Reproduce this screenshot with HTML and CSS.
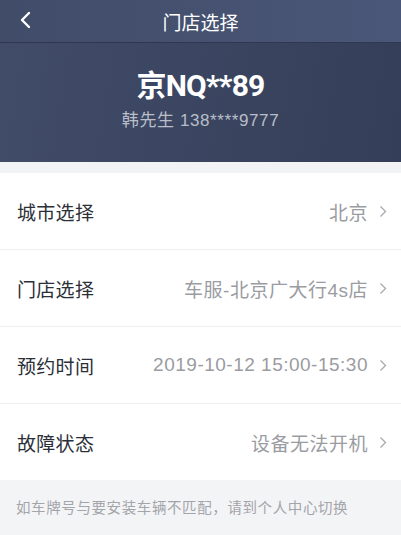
FILE: index.html
```html
<!DOCTYPE html>
<html lang="zh-CN">
<head>
    <meta charset="UTF-8">
    <meta name="viewport" content="width=device-width, initial-scale=1.0">
    <title>门店选择</title>
    <link rel="stylesheet" href="styles.css">
</head>
<body>
    <div class="nav">
        <span class="back">
            <svg width="14" height="18" viewBox="0 0 14 18"><path d="M11 2 L4 9 L11 16" fill="none" stroke="#fff" stroke-width="2.4" stroke-linecap="round" stroke-linejoin="round"/></svg>
        </span>
        <span class="nav-title">门店选择</span>
    </div>
    <div class="banner">
        <div class="plate">京NQ**89</div>
        <div class="owner">韩先生 138****9777</div>
    </div>
    <div class="gap"></div>
    <div class="list">
        <div class="row">
            <span class="label">城市选择</span>
            <span class="value">北京</span>
            <svg class="chev" width="8" height="13" viewBox="0 0 8 13"><path d="M1.5 1.5 L6.5 6.5 L1.5 11.5" fill="none" stroke="#a6a9ae" stroke-width="1.3"/></svg>
        </div>
        <div class="row">
            <span class="label">门店选择</span>
            <span class="value">车服-北京广大行4s店</span>
            <svg class="chev" width="8" height="13" viewBox="0 0 8 13"><path d="M1.5 1.5 L6.5 6.5 L1.5 11.5" fill="none" stroke="#a6a9ae" stroke-width="1.3"/></svg>
        </div>
        <div class="row">
            <span class="label">预约时间</span>
            <span class="value">2019-10-12 15:00-15:30</span>
            <svg class="chev" width="8" height="13" viewBox="0 0 8 13"><path d="M1.5 1.5 L6.5 6.5 L1.5 11.5" fill="none" stroke="#a6a9ae" stroke-width="1.3"/></svg>
        </div>
        <div class="row">
            <span class="label">故障状态</span>
            <span class="value">设备无法开机</span>
            <svg class="chev" width="8" height="13" viewBox="0 0 8 13"><path d="M1.5 1.5 L6.5 6.5 L1.5 11.5" fill="none" stroke="#a6a9ae" stroke-width="1.3"/></svg>
        </div>
    </div>
    <div class="tip">如车牌号与要安装车辆不匹配，请到个人中心切换</div>
</body>
</html>
```
FILE: styles.css
```css
body {
    margin: 0;
    width: 401px;
    height: 535px;
    overflow: hidden;
    background-color: #f3f4f6;
    font-family: "Noto Sans CJK SC", "Noto Sans", sans-serif;
}
.nav {
    height: 42px;
    border-bottom: 1px solid #2f3751;
    background: linear-gradient(90deg, #414c69, #4b5778);
    display: flex;
    align-items: center;
    justify-content: center;
    position: relative;
}
.back {
    position: absolute;
    left: 18px;
    top: 10px;
}
.nav-title {
    color: #ffffff;
    font-size: 19px;
}
.banner {
    height: 119px;
    background: linear-gradient(100deg, #414c69, #343e58);
    display: flex;
    flex-direction: column;
    align-items: center;
    color: #ffffff;
}
.plate {
    margin-top: 22px;
    font-family: Roboto, "Noto Sans CJK SC", sans-serif;
    font-weight: bold;
    font-size: 30px;
    line-height: 42px;
    letter-spacing: -0.8px;
}
.owner {
    margin-top: 3px;
    font-family: "Liberation Sans", "Noto Sans CJK SC", sans-serif;
    font-size: 17px;
    line-height: 22px;
    letter-spacing: 0.6px;
    color: #b9bec9;
}
.gap {
    height: 11px;
    background-color: #f2f3f5;
}
.list {
    background-color: #ffffff;
}
.row {
    height: 76px;
    display: flex;
    align-items: center;
    padding: 0 14px 0 17px;
    border-bottom: 1px solid #eeeff2;
}
.row:last-child {
    border-bottom: none;
}
.label {
    flex: 1;
    font-size: 19px;
    letter-spacing: 0.3px;
    color: #2b2f38;
}
.value {
    font-family: "Liberation Sans", "Noto Sans CJK SC", sans-serif;
    font-size: 19px;
    letter-spacing: 0.5px;
    color: #9a9ca2;
}
.chev {
    margin-left: 11px;
}
.tip {
    padding: 15px 16px;
    font-size: 14.5px;
    line-height: 24px;
    letter-spacing: 0.6px;
    color: #a3a5aa;
}
```
